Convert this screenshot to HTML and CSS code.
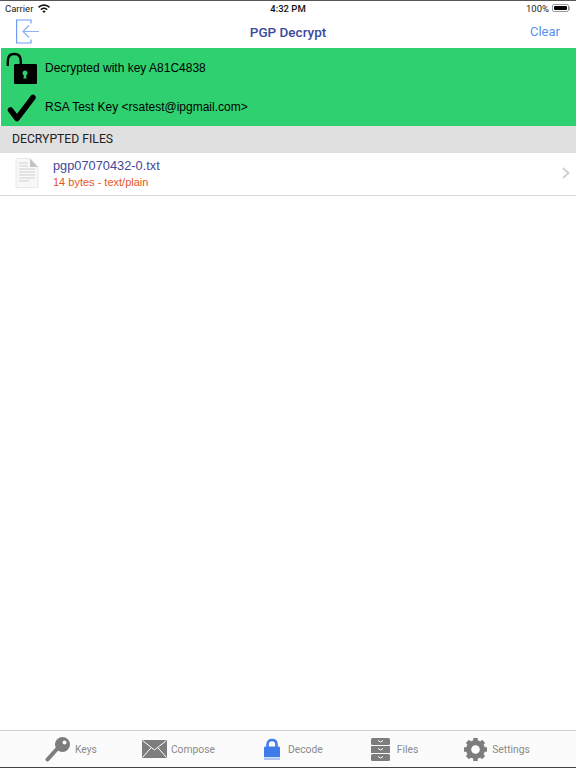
FILE: index.html
```html
<!DOCTYPE html>
<html lang="en">
<head>
  <meta charset="UTF-8">
  <title>PGP Decrypt</title>
  <link rel="stylesheet" href="styles.css">
</head>
<body>
  <div class="screen">
    <div class="status-bar">
      <div class="status-left">
        <span>Carrier</span>
        <svg class="wifi" viewBox="0 0 12 9" width="12" height="9">
          <path d="M0 2.800C3.400-.6 8.600-.6 12 2.800L10.900 3.900C8 1.300 4 1.300 1.100 3.900Z" fill="#111"/>
          <path d="M2.300 5.100C4.400 3 7.600 3 9.700 5.100L8.600 6.200C7 4.700 5 4.700 3.400 6.200Z" fill="#111"/>
          <path d="M4.400 7.200C5.300 6.300 6.700 6.300 7.600 7.200L6 8.900Z" fill="#111"/>
        </svg>
      </div>
      <div class="status-time">4:32 PM</div>
      <div class="status-right">
        <span>100%</span>
        <span class="battery"><span class="battery-fill"></span></span>
        <span class="battery-tip"></span>
      </div>
    </div>

    <header class="nav-bar">
      <svg class="nav-back" viewBox="0 0 25 25" width="25" height="25" fill="none" stroke="#6f9df2" stroke-width="1.200">
        <path d="M16 4.500V1H1.600V24H16V20.500"/>
        <path d="M24 12.500H8M14 6.500L8 12.500L14 18.500" stroke="#8db0f4"/>
      </svg>
      <h1 class="nav-title">PGP Decrypt</h1>
      <span class="nav-action">Clear</span>
    </header>

    <section class="result-panel">
      <div class="result-row">
        <svg class="result-icon" viewBox="0 0 34 34" width="34" height="34">
          <path d="M3.800 15V10C3.800 5 6.800 3 10.300 3S16.800 5 16.800 10V14" fill="none" stroke="#000" stroke-width="2.400"/>
          <path fill-rule="evenodd" d="M11.500 13H31.500C32.500 13 33 13.500 33 14.500V31.500C33 32.500 32.500 33 31.500 33H11.500C10.500 33 10 32.500 10 31.500V14.500C10 13.500 10.500 13 11.500 13ZM21 19.500A2.500 2.500 0 0 0 19.800 24.200L19.500 27.500H22.500L22.200 24.200A2.500 2.500 0 0 0 21 19.500Z"/>
        </svg>
        <span>Decrypted with key A81C4838</span>
      </div>
      <div class="result-row">
        <svg class="result-icon" viewBox="0 0 34 30" width="34" height="30">
          <path d="M6.500 18L13 26.500L29 5.500" fill="none" stroke="#000" stroke-width="5.500" stroke-linecap="round" stroke-linejoin="round"/>
        </svg>
        <span>RSA Test Key &lt;rsatest@ipgmail.com&gt;</span>
      </div>
    </section>

    <div class="section-header">DECRYPTED FILES</div>

    <div class="file-row">
      <svg class="file-icon" viewBox="0 0 24 30" width="24" height="30">
        <path d="M1 .5H15L23 9V29.500H1Z" fill="#f8f8f8" stroke="#e8e8e8"/>
        <path d="M15 .5L23 9H15Z" fill="#c4c4c4"/>
        <path d="M4 5H13M4 8H13M4 11H20M4 14H20M4 17H20M4 20H20M4 23H14" stroke="#cfcfcf" stroke-width="1"/>
      </svg>
      <div class="file-info">
        <div class="file-name">pgp07070432-0.txt</div>
        <div class="file-meta">14 bytes - text/plain</div>
      </div>
      <svg class="chevron" viewBox="0 0 8 12" width="8" height="12" fill="none" stroke="#cfcfd3" stroke-width="1.800">
        <path d="M1 1L6.500 6L1 11"/>
      </svg>
    </div>

    <div class="spacer"></div>

    <nav class="tab-bar">
      <div class="tab">
        <svg viewBox="0 0 26 26" width="26" height="26">
          <path d="M2.500 23.500L12 13" stroke="#7d7d7d" stroke-width="4" stroke-linecap="round"/>
          <circle cx="17.500" cy="8.500" r="7.500" fill="#7d7d7d"/>
          <circle cx="19.500" cy="6.500" r="2" fill="#fff"/>
        </svg>
        <span>Keys</span>
      </div>
      <div class="tab">
        <svg viewBox="0 0 25 18" width="25" height="18">
          <rect width="25" height="18" fill="#7d7d7d"/>
          <path d="M.5 .5L12.500 10L24.500 .5M.5 17.500L9 7.800M24.500 17.500L16 7.800" fill="none" stroke="#fff" stroke-width="1"/>
        </svg>
        <span>Compose</span>
      </div>
      <div class="tab tab-decode">
        <svg viewBox="0 0 16 22" width="16" height="22">
          <path d="M3.500 10V6.500C3.500 3.500 5.500 2 8 2S12.500 3.500 12.500 6.500V10" fill="none" stroke="#3f7bea" stroke-width="2.600"/>
          <path d="M1.500 8.500H14.500C15.300 8.500 16 9.200 16 10V19H0V10C0 9.200 .7 8.500 1.500 8.500Z" fill="#3f7bea"/>
          <rect y="19.500" width="16" height="2.500" fill="#a9c4f5"/>
        </svg>
        <span>Decode</span>
      </div>
      <div class="tab tab-files">
        <svg viewBox="0 0 19 23" width="19" height="23">
          <rect width="19" height="7" y="0" rx="1.500" fill="#7d7d7d"/>
          <rect width="19" height="7" y="8" fill="#7d7d7d"/>
          <rect width="19" height="7" y="16" rx="1.500" fill="#7d7d7d"/>
          <path d="M7 2.500L9.500 4L12 2.500M7 10.500L9.500 12L12 10.500M7 18.500L9.500 20L12 18.500" fill="none" stroke="#fff" stroke-width="1"/>
        </svg>
        <span>Files</span>
      </div>
      <div class="tab">
        <svg viewBox="0 0 25 25" width="25" height="25">
          <circle cx="12.500" cy="12.500" r="7" fill="none" stroke="#7d7d7d" stroke-width="5"/>
          <path d="M12.500 1V24M1 12.500H24M4.400 4.400L20.600 20.600M20.600 4.400L4.400 20.600" stroke="#7d7d7d" stroke-width="4.500"/>
          <circle cx="12.500" cy="12.500" r="4.300" fill="#fff"/>
        </svg>
        <span>Settings</span>
      </div>
    </nav>
  </div>
</body>
</html>
```

FILE: styles.css
```css
* {
  box-sizing: border-box;
}
body {
  margin: 0;
  padding: 0;
  background-color: #ffffff;
  font-family: 'Liberation Sans', Arial, sans-serif;
}
.screen {
  width: 576px;
  height: 768px;
  display: flex;
  flex-direction: column;
  border-top: 1px solid #555555;
  border-bottom: 1px solid #444444;
  overflow: hidden;
}
.status-bar {
  height: 14px;
  padding: 0 5px;
  display: grid;
  grid-template-columns: 1fr auto 1fr;
  align-items: center;
  font-family: 'Roboto', sans-serif;
  font-size: 9.5px;
  color: #222222;
}
.status-left {
  display: flex;
  align-items: center;
  gap: 5px;
}
.status-time {
  font-weight: 500;
  color: #111111;
}
.status-right {
  display: flex;
  align-items: center;
  justify-content: flex-end;
  padding-right: 1px;
}
.battery {
  margin-left: 3px;
  width: 17px;
  height: 8px;
  padding: 1px;
  border: 1px solid #999999;
  border-radius: 2px;
  display: flex;
}
.battery-fill {
  flex: 1;
  background-color: #000000;
  border-radius: 1px;
}
.battery-tip {
  width: 1px;
  height: 3px;
  background-color: #999999;
}
.nav-bar {
  height: 33px;
  padding: 0 16px 0 15px;
  display: flex;
  align-items: center;
  justify-content: space-between;
  position: relative;
}
.nav-title {
  position: absolute;
  left: 0;
  right: 0;
  margin: 0;
  text-align: center;
  font-family: 'Roboto', sans-serif;
  font-size: 13.5px;
  font-weight: 500;
  color: #3d4a9c;
}
.nav-action {
  font-family: 'Roboto', sans-serif;
  font-size: 13px;
  color: #5b8ff0;
}
.result-panel {
  height: 78px;
  margin-left: 1px;
  background-color: #2fd06f;
  display: flex;
  flex-direction: column;
}
.result-row {
  flex: 1;
  display: flex;
  align-items: center;
  gap: 7px;
  padding-left: 3px;
  font-size: 12px;
  color: #000000;
}
.result-icon {
  flex: none;
}
.section-header {
  height: 26px;
  padding-left: 12px;
  display: flex;
  align-items: center;
  background-color: #e0e0e0;
  font-family: 'Roboto', sans-serif;
  font-size: 12.2px;
  color: #222222;
}
.file-row {
  height: 44px;
  padding: 0 6px 2px 15px;
  display: flex;
  align-items: center;
  border-bottom: 1px solid #d8d8d8;
  border-top: 1px solid #e0e0e0;
}
.file-icon {
  flex: none;
}
.file-info {
  flex: 1;
  margin-left: 14px;
}
.file-name {
  font-size: 12.8px;
  color: #45479a;
}
.file-meta {
  margin-top: 3px;
  font-size: 11px;
  color: #e8561c;
}
.spacer {
  flex: 1;
}
.tab-bar {
  height: 37px;
  padding: 0 0 0 45px;
  display: flex;
  align-items: center;
  gap: 45px;
  border-top: 1px solid #d0d0d0;
  background-color: #fbfbfb;
}
.tab {
  display: flex;
  align-items: center;
  gap: 4px;
  font-family: 'Roboto', sans-serif;
  font-size: 10.3px;
  color: #8a8a8a;
}
.tab-decode {
  margin-left: 4px;
  gap: 8px;
}
.tab-files {
  margin-left: 3px;
  gap: 7px;
}
```
